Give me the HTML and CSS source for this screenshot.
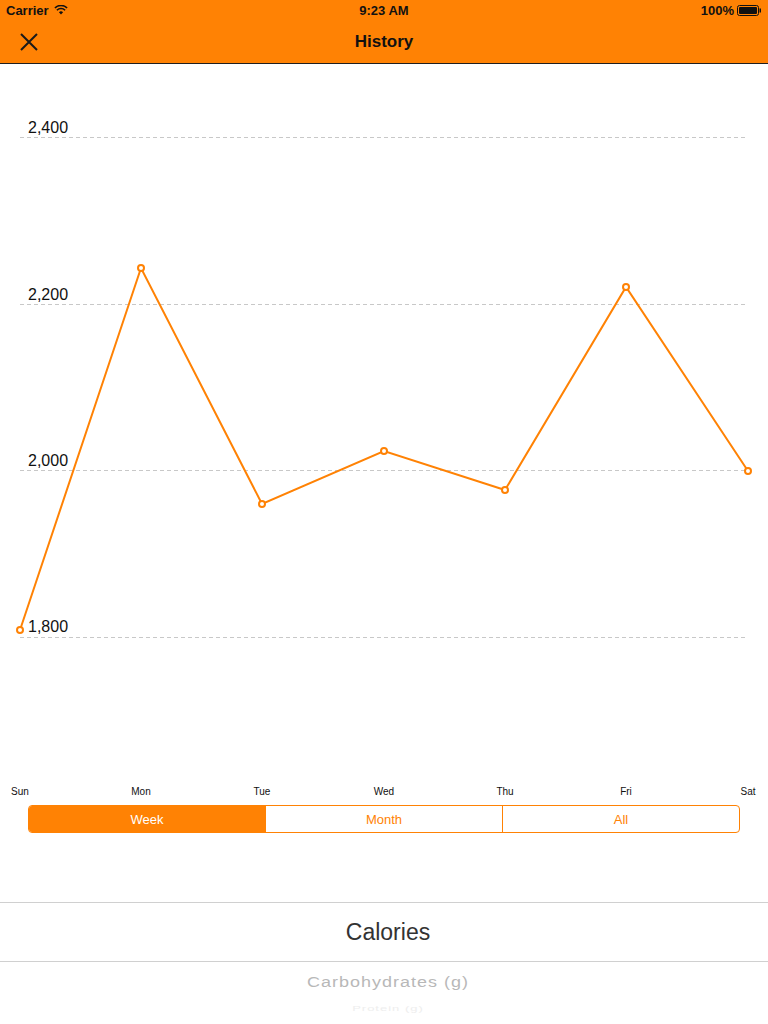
FILE: index.html
```html
<!DOCTYPE html>
<html lang="en">

<head>
    <meta charset="UTF-8">
    <meta name="viewport" content="width=device-width, initial-scale=1.0">
    <title>History</title>
    <link rel="stylesheet" href="styles.css">
</head>

<body>
    <div class="top">
        <div class="status-bar">
            <div class="status-left">
                <span>Carrier</span>
                <svg class="wifi" width="14" height="10" viewBox="0 0 14 10">
                    <path d="M7 9.6 L4.9 7.3 A3 3 0 0 1 9.1 7.3 Z" fill="#111"/>
                    <path d="M2.9 5.2 A5.8 5.8 0 0 1 11.1 5.2" stroke="#111" stroke-width="1.6" fill="none"/>
                    <path d="M0.9 3.0 A8.6 8.6 0 0 1 13.1 3.0" stroke="#111" stroke-width="1.6" fill="none"/>
                </svg>
            </div>
            <div class="status-time">9:23 AM</div>
            <div class="status-right">
                <span>100%</span>
                <svg width="25" height="11" viewBox="0 0 25 11">
                    <rect x="0.5" y="0.5" width="21" height="10" rx="2" fill="none" stroke="#111"/>
                    <rect x="2" y="2" width="18" height="7" rx="1" fill="#111"/>
                    <rect x="22.5" y="3.5" width="1.5" height="4" fill="#111"/>
                </svg>
            </div>
        </div>
        <div class="nav-bar">
            <svg class="close" width="18" height="18" viewBox="0 0 18 18">
                <path d="M1 1 L17 17 M17 1 L1 17" stroke="#1a1a1a" stroke-width="2"/>
            </svg>
            <h1 class="nav-title">History</h1>
        </div>
    </div>

    <div class="chart">
        <svg width="768" height="736" viewBox="0 0 768 736">
            <g class="grid">
                <line x1="20" y1="73.5" x2="748" y2="73.5"/>
                <line x1="20" y1="240.5" x2="748" y2="240.5"/>
                <line x1="20" y1="406.5" x2="748" y2="406.5"/>
                <line x1="20" y1="573.5" x2="748" y2="573.5"/>
            </g>
            <g class="y-labels">
                <text x="28" y="69">2,400</text>
                <text x="28" y="236">2,200</text>
                <text x="28" y="402">2,000</text>
                <text x="28" y="568">1,800</text>
            </g>
            <polyline class="series" points="20,566 141,204 262,440 384,387 505,426 626,223 748,407"/>
            <g class="dots">
                <circle cx="20" cy="566" r="3"/>
                <circle cx="141" cy="204" r="3"/>
                <circle cx="262" cy="440" r="3"/>
                <circle cx="384" cy="387" r="3"/>
                <circle cx="505" cy="426" r="3"/>
                <circle cx="626" cy="223" r="3"/>
                <circle cx="748" cy="407" r="3"/>
            </g>
            <g class="x-labels">
                <text x="20" y="731">Sun</text>
                <text x="141" y="731">Mon</text>
                <text x="262" y="731">Tue</text>
                <text x="384" y="731">Wed</text>
                <text x="505" y="731">Thu</text>
                <text x="626" y="731">Fri</text>
                <text x="748" y="731">Sat</text>
            </g>
        </svg>
    </div>

    <div class="segmented">
        <div class="segment active">Week</div>
        <div class="segment">Month</div>
        <div class="segment">All</div>
    </div>

    <div class="picker">
        <div class="picker-row selected">Calories</div>
        <div class="picker-row next">Carbohydrates (g)</div>
        <div class="picker-row far">Protein (g)</div>
    </div>
</body>

</html>
```

FILE: styles.css
```css
body {
    margin: 0;
    padding: 0;
    width: 768px;
    height: 1024px;
    overflow: hidden;
    background-color: #fff;
    font-family: 'Liberation Sans', Arial, sans-serif;
    color: #111;
}

.top {
    background-color: #ff8204;
    border-bottom: 1px solid #1f1f1f;
}

.status-bar {
    height: 20px;
    display: flex;
    align-items: center;
    justify-content: space-between;
    padding: 0 6px;
    font-size: 13px;
    font-weight: bold;
    position: relative;
}

.status-left,
.status-right {
    display: flex;
    align-items: center;
    gap: 5px;
}

.status-right {
    gap: 3px;
}

.status-time {
    position: absolute;
    left: 0;
    right: 0;
    text-align: center;
    pointer-events: none;
}

.nav-bar {
    height: 43px;
    display: flex;
    align-items: center;
    position: relative;
    padding-left: 20px;
}

.nav-title {
    position: absolute;
    left: 0;
    right: 0;
    margin: 0;
    text-align: center;
    font-size: 17px;
    font-weight: bold;
}

.chart svg {
    display: block;
}

.grid line {
    stroke: #c8c8c8;
    stroke-width: 1;
    stroke-dasharray: 4 3;
}

.y-labels text {
    font-size: 16px;
    fill: #111;
}

.x-labels text {
    font-size: 10px;
    fill: #111;
    text-anchor: middle;
}

.series {
    fill: none;
    stroke: #ff8204;
    stroke-width: 2;
    stroke-linejoin: miter;
}

.dots circle {
    fill: #fff;
    stroke: #ff8204;
    stroke-width: 2;
}

.segmented {
    display: flex;
    margin: 5px 28px 0;
    height: 28px;
    border: 1px solid #ff8204;
    border-radius: 4px;
    overflow: hidden;
    box-sizing: border-box;
}

.segment {
    flex: 1;
    display: flex;
    align-items: center;
    justify-content: center;
    font-size: 13px;
    color: #ff8204;
    border-left: 1px solid #ff8204;
}

.segment:first-child {
    border-left: none;
}

.segment.active {
    background-color: #ff8204;
    color: #fff;
}

.picker {
    margin-top: 69px;
    border-top: 1px solid #d0d0d0;
    padding-left: 8px;
}

.picker-row {
    text-align: center;
}

.picker-row.selected {
    height: 58px;
    line-height: 58px;
    font-size: 23px;
    color: #333;
    border-bottom: 1px solid #d0d0d0;
    margin-left: -8px;
    padding-left: 8px;
}

.picker-row.next {
    height: 40px;
    line-height: 40px;
    font-size: 18px;
    letter-spacing: 1px;
    color: #b8b8b8;
    transform: scaleY(0.85);
}

.picker-row.far {
    height: 14px;
    line-height: 14px;
    font-size: 13px;
    letter-spacing: 1px;
    color: #eee;
    transform: scaleY(0.5);
}
```
